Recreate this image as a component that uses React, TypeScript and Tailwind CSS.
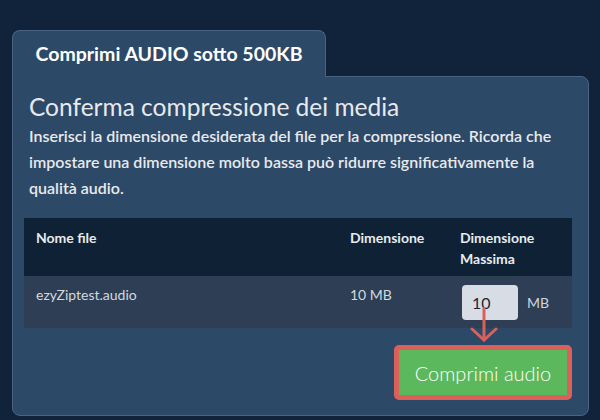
export default function App() {
  return (
    <div className="h-[420px] w-[600px] bg-[#11233a] px-3 pt-[30px] font-['Lato','Liberation_Sans',sans-serif]">
      {/* tab */}
      <div className="relative z-10 -mb-px flex h-[47px] w-[314px] items-center justify-center rounded-t-lg border border-b-0 border-[#4a6381] bg-[#2d4968]">
        <span className="text-[19.5px] font-bold text-white">Comprimi AUDIO sotto 500KB</span>
      </div>

      <div className="w-[577px] rounded-b-lg rounded-tr-lg border border-[#4a6381] bg-[#2d4968] px-[11px] pb-[15px] pt-[14px]">
        <h2 className="px-[5px] text-[24.5px] leading-8 text-[#e8eaed]">Conferma compressione dei media</h2>
        <p className="w-[552px] px-[5px] text-[16px] font-semibold leading-[26px] text-[#e8eaed]">
          Inserisci la dimensione desiderata del file per la compressione. Ricorda che impostare una dimensione molto bassa può ridurre significativamente la qualità audio.
        </p>

        <table className="mt-[17px] w-[548px] border-collapse text-[14px]">
          <thead>
            <tr className="h-[58px] bg-[#0f2235] text-left align-top font-bold text-[#e8eaed]">
              <th className="pl-3 pt-[9px] leading-[21px]">Nome file</th>
              <th className="w-[110px] pl-3 pt-[9px] leading-[21px]">Dimensione</th>
              <th className="w-[124px] pl-3 pt-[9px] leading-[21px]">
                Dimensione
                <br />
                Massima
              </th>
            </tr>
          </thead>
          <tbody>
            <tr className="h-[52px] bg-[#2e3f55] align-top text-[#d3d8df]">
              <td className="pl-3 pt-[9px] leading-5">ezyZiptest.audio</td>
              <td className="pl-3 pt-[9px] leading-5">10 MB</td>
              <td className="pl-[14px] pt-[9px]">
                <div className="relative flex items-center gap-[9px]">
                  <div className="flex h-[35px] w-[56px] items-center rounded-sm bg-[#d8dce4] pl-[10px] text-[16px] text-[#1f2530]">
                    10
                  </div>
                  <span className="text-[14px] text-[#cfd5dd]">MB</span>
                  <svg
                    className="absolute left-[8px] top-[22px]"
                    width="30"
                    height="36"
                    viewBox="0 0 30 36"
                    fill="none"
                    stroke="#dc605a"
                    strokeWidth="3"
                    strokeLinecap="round"
                  >
                    <path d="M14 1 V33" />
                    <path d="M2 22 L14 33 L26 22" />
                  </svg>
                </div>
              </td>
            </tr>
          </tbody>
        </table>

        <div className="mt-[17px] flex w-[548px] justify-end">
          <button className="flex h-[55px] w-[178px] items-center justify-center rounded-[5px] border-[5px] border-[#dc605a] bg-[#5cb85c] text-[20px] font-light text-white">
            Comprimi audio
          </button>
        </div>
      </div>
    </div>
  );
}
